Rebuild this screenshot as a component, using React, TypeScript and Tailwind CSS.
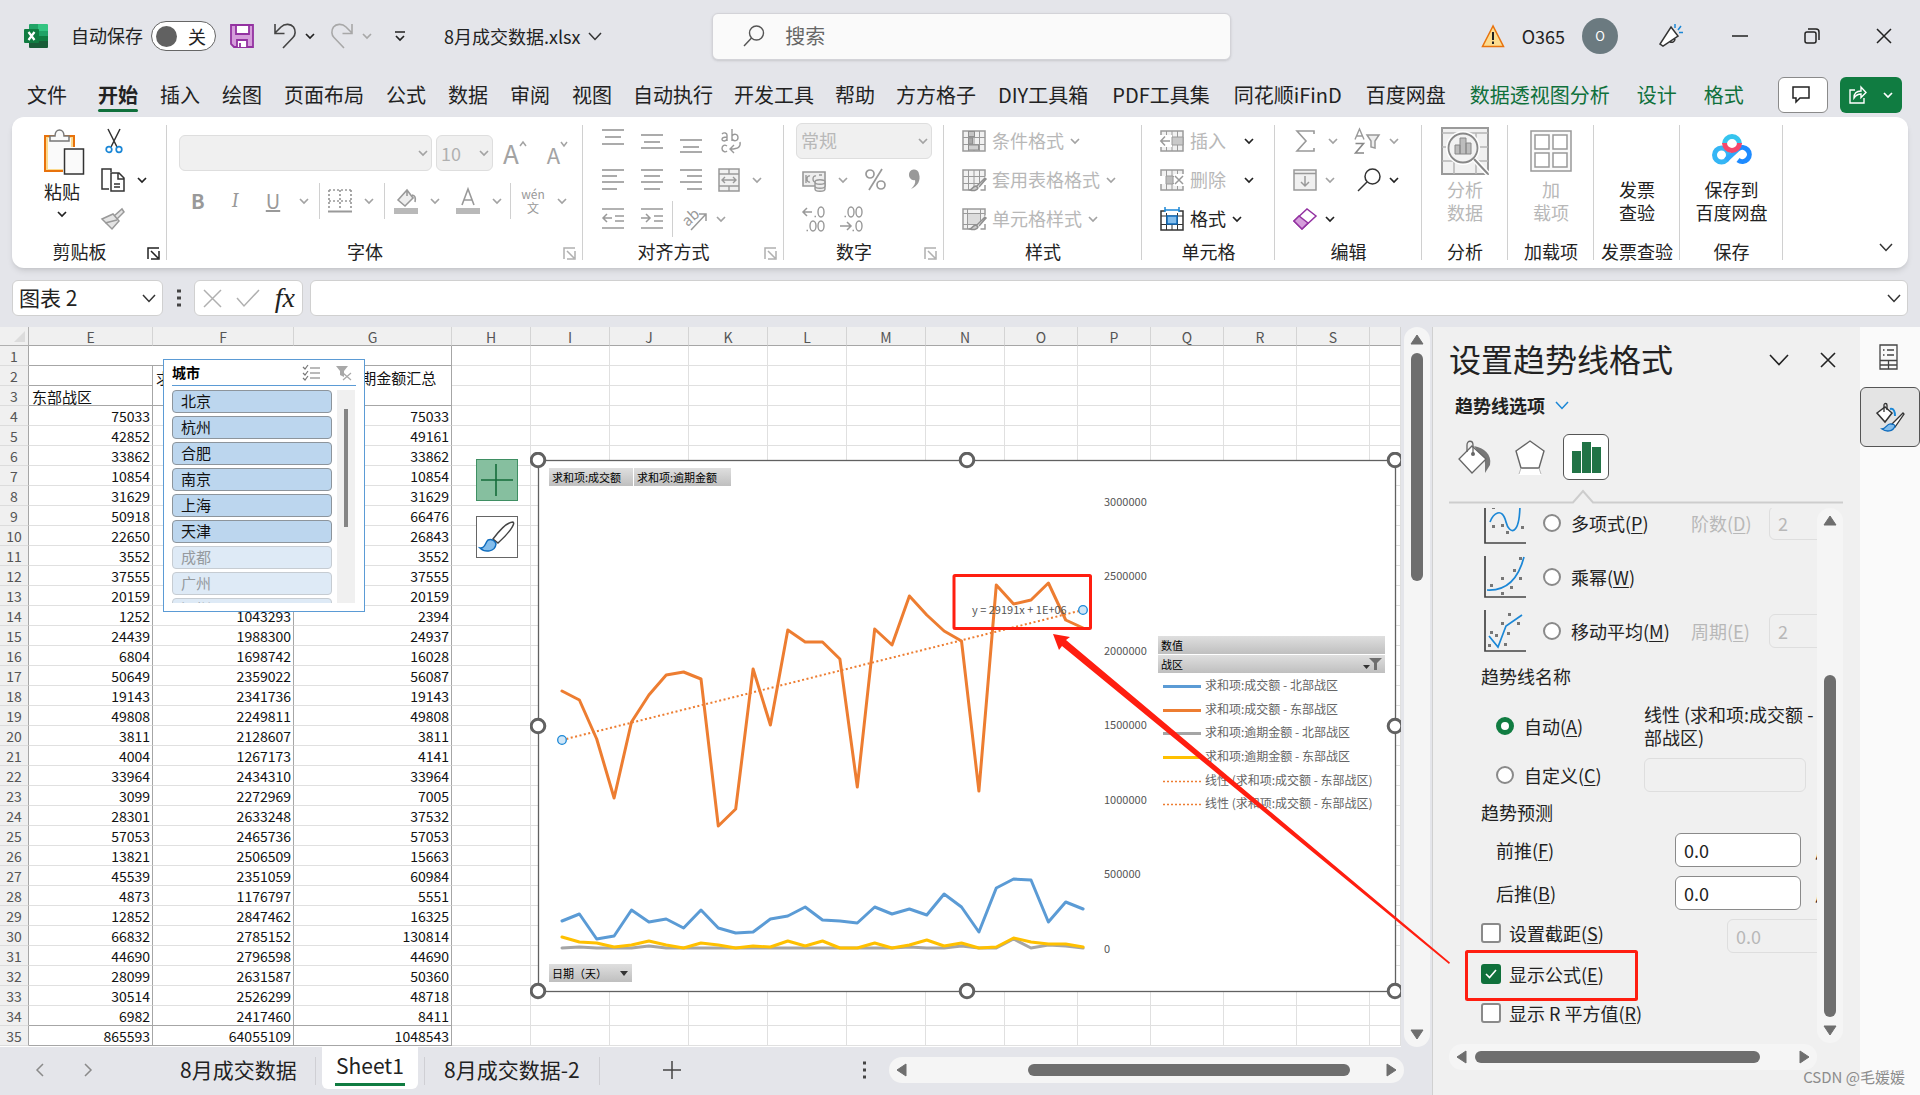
import { useState } from 'react'
import type { ReactNode } from 'react'

const COLS = [
  { name: 'E', w: 'w-[124px]' },
  { name: 'F', w: 'w-[141px]' },
  { name: 'G', w: 'w-[158px]' },
  { name: 'H', w: 'w-[79px]' },
  { name: 'I', w: 'w-[79px]' },
  { name: 'J', w: 'w-[79px]' },
  { name: 'K', w: 'w-[79px]' },
  { name: 'L', w: 'w-[79px]' },
  { name: 'M', w: 'w-[79px]' },
  { name: 'N', w: 'w-[79px]' },
  { name: 'O', w: 'w-[73px]' },
  { name: 'P', w: 'w-[73px]' },
  { name: 'Q', w: 'w-[73px]' },
  { name: 'R', w: 'w-[73px]' },
  { name: 'S', w: 'w-[73px]' },
  { name: '', w: '' },
]

// E, F, G values by row; the slicer covers F4:F13
const ROWS: string[][] = [
  ['', '', ''],
  ['', '求和项:成交额汇总', '求和项:逾期金额汇总'],
  ['东部战区', '', ''],
  ['75033', '', '75033'],
  ['42852', '', '49161'],
  ['33862', '', '33862'],
  ['10854', '', '10854'],
  ['31629', '', '31629'],
  ['50918', '', '66476'],
  ['22650', '', '26843'],
  ['3552', '', '3552'],
  ['37555', '', '37555'],
  ['20159', '', '20159'],
  ['1252', '1043293', '2394'],
  ['24439', '1988300', '24937'],
  ['6804', '1698742', '16028'],
  ['50649', '2359022', '56087'],
  ['19143', '2341736', '19143'],
  ['49808', '2249811', '49808'],
  ['3811', '2128607', '3811'],
  ['4004', '1267173', '4141'],
  ['33964', '2434310', '33964'],
  ['3099', '2272969', '7005'],
  ['28301', '2633248', '37532'],
  ['57053', '2465736', '57053'],
  ['13821', '2506509', '15663'],
  ['45539', '2351059', '60984'],
  ['4873', '1176797', '5551'],
  ['12852', '2847462', '16325'],
  ['66832', '2785152', '130814'],
  ['44690', '2796598', '44690'],
  ['28099', '2631587', '50360'],
  ['30514', '2526299', '48718'],
  ['6982', '2417460', '8411'],
  ['865593', '64055109', '1048543'],
]

// y positions of the 31 daily points, in chart units
const EAST = [691, 700, 739, 798, 722, 695, 675, 672, 679, 826, 809, 669, 725, 630, 642, 642, 659, 787, 629, 645, 596, 615, 631, 641, 791, 585, 604, 600, 583, 620, 628]
const NORTH = [921, 914, 939, 936, 910, 922, 919, 928, 910, 928, 933, 932, 919, 916, 907, 920, 921, 923, 907, 914, 909, 915, 894, 907, 932, 888, 879, 880, 922, 902, 909]
const EAST_DUE = [937, 942, 943, 947, 945, 941, 945, 948, 943, 945, 948, 946, 947, 941, 946, 941, 948, 948, 943, 948, 945, 940, 946, 943, 948, 947, 938, 942, 944, 944, 947]
const NORTH_DUE = [948, 947, 948, 948, 948, 946, 948, 948, 948, 948, 948, 948, 948, 948, 948, 948, 948, 948, 948, 948, 947, 948, 948, 946, 948, 948, 939, 948, 945, 946, 948]

const toPoints = (ys: number[]) => ys.map((y, i) => `${(562 + i * 17.37).toFixed(1)},${y}`).join(' ')

const LEGEND = [
  { label: '求和项:成交额 - 北部战区', color: '#5b9bd5', y: 686 },
  { label: '求和项:成交额 - 东部战区', color: '#ed7d31', y: 710 },
  { label: '求和项:逾期金额 - 北部战区', color: '#a5a5a5', y: 733 },
  { label: '求和项:逾期金额 - 东部战区', color: '#ffc000', y: 757 },
  { label: '线性 (求和项:成交额 - 东部战区)', color: '#ed7d31', y: 781, dotted: true },
  { label: '线性 (求和项:成交额 - 东部战区)', color: '#ed7d31', y: 804, dotted: true },
]

const AXIS = ['3000000', '2500000', '2000000', '1500000', '1000000', '500000', '0']
const AXIS_Y = [502, 576, 651, 725, 800, 874, 949]

const MENU = ['插入', '绘图', '页面布局', '公式', '数据', '审阅', '视图', '自动执行', '开发工具', '帮助', '方方格子']
const ADDIN_MENU = ['DIY工具箱', 'PDF工具集', '同花顺iFinD', '百度网盘']
const CONTEXT_MENU = ['数据透视图分析', '设计', '格式']

const CITIES = ['北京', '杭州', '合肥', '南京', '上海', '天津', '成都', '广州', '深圳']

function Svg({ w, h, children, className = '' }: { w: number; h: number; children: ReactNode; className?: string }) {
  return (
    <svg width={w} height={h} viewBox={`0 0 ${w} ${h}`} fill="none" className={`shrink-0 overflow-visible ${className}`} aria-hidden="true">
      {children}
    </svg>
  )
}

function Chev({ className = 'text-[#222]' }: { className?: string }) {
  return (
    <Svg w={10} h={6} className={className}>
      <path d="M1 1l4 4 4-4" stroke="currentColor" strokeWidth="1.700" />
    </Svg>
  )
}

function BigChev({ className = 'text-[#333]' }: { className?: string }) {
  return (
    <Svg w={14} h={9} className={className}>
      <path d="M1 1l6 6.500 6-6.500" stroke="currentColor" strokeWidth="1.500" />
    </Svg>
  )
}

const gray = 'text-[#a3a3a3]'

function Group({ label, width, launcher, dark, children }: { label: string; width: string; launcher?: boolean; dark?: boolean; children: ReactNode }) {
  return (
    <section className={`${width} shrink-0 relative flex flex-col pt-1 pb-1 after:absolute after:right-0 after:top-2 after:bottom-2 after:w-px after:bg-[#d0d0d0]`}>
      <div className="h-[117px]">{children}</div>
      <div className="h-[26px] flex items-center">
        <span className="flex-1 text-center text-[18px] leading-6 whitespace-nowrap text-[#222]">{label}</span>
        {launcher && (
          <button aria-label={`${label}设置`} className={`w-5 mt-1 ${dark ? 'text-[#222]' : 'text-[#b0b0b0]'}`}>
            <Svg w={13} h={13}>
              <path d="M1 12V1h11M4 4l7 7M12 4v8H4" stroke="currentColor" strokeWidth="1.500" />
            </Svg>
          </button>
        )}
      </div>
    </section>
  )
}

// horizontal strokes for the alignment buttons: [x1, x2, y]
function Lines({ rows, label }: { rows: number[][]; label: string }) {
  return (
    <button aria-label={label} className="w-[22px]">
      <Svg w={22} h={24}>
        {rows.map(([a, b, y]) => (
          <path key={y} d={`M${a} ${y}H${b}`} stroke="#8f8f8f" strokeWidth="1.500" />
        ))}
      </Svg>
    </button>
  )
}

function TableIcon({ kind }: { kind: 'cond' | 'brush' | 'style' | 'insert' | 'delete' }) {
  return (
    <Svg w={24} h={24}>
      <rect x="1" y="2" width="22" height="20" fill="#f1f1f1" stroke="#9a9a9a" strokeWidth="1.500" />
      {kind !== 'style' && <path d="M1 8.500h22M1 15.500h22M6.500 2v20M12 2v20M17.500 2v20" stroke="#9a9a9a" />}
      {kind === 'style' && (
        <>
          <path d="M6 7h12v10H6z" fill="#dcdcdc" />
          <path d="M1 6.500h22M1 17.500h22M5.500 2v20M18.500 2v20" stroke="#9a9a9a" />
        </>
      )}
      {kind === 'cond' && (
        <g stroke="#8f8f8f">
          <rect x="6.500" y="2.500" width="6" height="5" fill="#c4c4c4" />
          <rect x="6.500" y="9" width="4" height="6" fill="#a8a8a8" />
          <rect x="6.500" y="16" width="10" height="5" fill="#d0d0d0" />
        </g>
      )}
      {(kind === 'brush' || kind === 'style') && (
        <>
          <path d="M24 8L11 22v2h13z" fill="#fff" />
          <path d="M23 10l-9 9M14 18c-3 0-3 3-6 4 3 1 7 1 8-2zM23 10l1 1-7 8" stroke="#8f8f8f" strokeWidth="1.500" fill="#ccc" />
          <path d="M18.500 22H23v-5" stroke="#9a9a9a" strokeWidth="1.500" />
        </>
      )}
      {kind === 'insert' && (
        <>
          <path d="M0 6h12v12H0z" fill="#fff" />
          <path d="M12 8h11v8H12z" fill="#c9c9c9" stroke="#9a9a9a" />
          <path d="M10 12H1M5 7.500L.8 12 5 16.500" stroke="#9a9a9a" strokeWidth="1.500" />
        </>
      )}
      {kind === 'delete' && (
        <>
          <path d="M0 8h6v8H0zM14 6h10v12H14z" fill="#fff" />
          <path d="M6 8h7v8H6z" fill="#bdbdbd" stroke="#9a9a9a" />
          <path d="M15 8l8 8M23 8l-8 8" stroke="#9a9a9a" strokeWidth="1.500" />
        </>
      )}
    </Svg>
  )
}

function TitleBar() {
  const [autosave, setAutosave] = useState(false)
  return (
    <header className="h-[72px] flex items-center pl-6 pr-7 text-[18px] leading-6 text-[#222] relative">
      <Svg w={24} h={24}>
        <path d="M5 1a1 1 0 011-1h8v8H5z" fill="#21a366" />
        <path d="M14 0h9a1 1 0 011 1v6H14z" fill="#33c481" />
        <path d="M5 7h9v6H5z" fill="#107c41" />
        <path d="M14 7h10v6H14z" fill="#21a366" />
        <path d="M5 12h9v6H5z" fill="#185c37" />
        <path d="M14 12h10v6H14z" fill="#107c41" />
        <path d="M5 17h19v6a1 1 0 01-1 1H6a1 1 0 01-1-1z" fill="#185c37" />
        <rect x="0" y="5" width="15" height="14" rx="1" fill="#107c41" />
        <path d="M4.500 8l6 8M10.500 8l-6 8" stroke="#fff" strokeWidth="2.200" />
      </Svg>
      <span className="ml-[23px] pb-0.5">自动保存</span>
      <button
        role="switch"
        aria-checked={autosave}
        aria-label="自动保存"
        onClick={() => setAutosave(!autosave)}
        className="ml-2 w-[65px] h-[30px] rounded-full border border-[#666] bg-white flex items-center justify-between pl-1 pr-[9px]"
      >
        <span className="size-[21px] rounded-full bg-[#616161]" />
        <span>关</span>
      </button>
      <button aria-label="保存" className="ml-[14px]">
        <Svg w={24} h={24}>
          <path d="M1 1h22v22H4l-3-3z" fill="#d59ddb" stroke="#9332a1" strokeWidth="1.800" />
          <path d="M6 1h13v9H6zM7 23v-7h10v7" fill="#fff" stroke="#9332a1" strokeWidth="1.800" />
          <path d="M10 19v4" stroke="#9332a1" strokeWidth="1.800" />
        </Svg>
      </button>
      <button aria-label="撤消" className="ml-5 flex items-center gap-[9px]">
        <Svg w={22} h={24}>
          <path d="M1 0v9.500h9.500M1 9l6-6c4-4 10-3 12.500 0 2.500 3.500 2 8-.5 10.500L9 24" stroke="#444" strokeWidth="1.600" />
        </Svg>
        <Chev />
      </button>
      <button aria-label="恢复" className="ml-4 flex items-center gap-[9px]">
        <Svg w={22} h={24}>
          <path d="M21 0v9.500h-9.500M21 9l-6-6C11 -1 5 0 2.500 3 0 6.500.5 11 3 13.500L13 24" stroke="#a8a8a8" strokeWidth="1.600" />
        </Svg>
        <Chev className="text-[#a8a8a8]" />
      </button>
      <button aria-label="自定义快速访问工具栏" className="ml-[22px]">
        <Svg w={12} h={10}>
          <path d="M1 1h10M2 5l4 4 4-4" stroke="#222" strokeWidth="1.700" />
        </Svg>
      </button>
      <button className="ml-[38px] flex items-center gap-2 whitespace-nowrap">
        8月成交数据.xlsx <BigChev />
      </button>

      {/* search */}
      <label className="absolute left-[37.1%] w-[27%] h-[47px] rounded-md bg-[#fafafa] border border-[#d3d3d8] shadow flex items-center pl-[30px] gap-5">
        <Svg w={22} h={22}>
          <circle cx="13.500" cy="8" r="7" stroke="#555" strokeWidth="1.400" />
          <path d="M8.500 13L1 21" stroke="#555" strokeWidth="1.400" />
        </Svg>
        <input aria-label="搜索" placeholder="搜索" className="flex-1 text-[20px] bg-transparent outline-none placeholder:text-[#666]" />
      </label>

      <div className="ml-auto flex items-center">
        <Svg w={24} h={24}>
          <path d="M12 2L1.500 22.500h21z" fill="#fcdc8f" stroke="#e8720c" strokeWidth="1.500" />
          <path d="M12 8v8M12 17.500v2.500" stroke="#222" strokeWidth="2" />
        </Svg>
        <span className="mx-[17px]">O365</span>
        <button aria-label="帐户" className="size-9 rounded-full bg-[#6b7a80] text-white text-[13px]">O</button>
        <button aria-label="即将推出" className="ml-10">
          <Svg w={26} h={26}>
            <path d="M13 4l7 9-15 10-3-2zM12 19a3.500 3.500 0 005-3" fill="#fff" stroke="#333" strokeWidth="1.500" />
            <path d="M17 5V1M20 7l3-4M21 9.500h4" stroke="#1b87d6" strokeWidth="1.500" />
          </Svg>
        </button>
        <button aria-label="最小化" className="ml-12">
          <Svg w={16} h={16}><path d="M0 8h16" stroke="#222" strokeWidth="1.500" /></Svg>
        </button>
        <button aria-label="向下还原" className="ml-14">
          <Svg w={16} h={16}>
            <rect x="1" y="4" width="11" height="11" rx="2" stroke="#222" strokeWidth="1.500" />
            <path d="M4 1h8a3 3 0 013 3v8" stroke="#222" strokeWidth="1.500" />
          </Svg>
        </button>
        <button aria-label="关闭" className="ml-14">
          <Svg w={16} h={16}><path d="M1 1l14 14M15 1L1 15" stroke="#222" strokeWidth="1.500" /></Svg>
        </button>
      </div>
    </header>
  )
}

function MenuBar() {
  return (
    <nav className="h-[45px] flex items-center pl-[27px] pr-[18px] text-[20px] leading-8 text-[#222] whitespace-nowrap">
      <button>文件</button>
      <button className="ml-[31px] font-bold relative after:absolute after:inset-x-0 after:-bottom-px after:h-[3px] after:rounded-full after:bg-[#0f703b]">开始</button>
      <div className="ml-[22px] flex gap-[22px]">
        {MENU.slice(0, 7).map(m => <button key={m}>{m}</button>)}
      </div>
      <div className="ml-[21px] flex gap-[21px]">
        {MENU.slice(7).map(m => <button key={m}>{m}</button>)}
      </div>
      <div className="ml-[22px] flex gap-6">
        {ADDIN_MENU.map(m => <button key={m}>{m}</button>)}
      </div>
      <div className="ml-6 flex gap-[27px] text-[#0f703b]">
        {CONTEXT_MENU.map(m => <button key={m}>{m}</button>)}
      </div>
      <div className="ml-auto flex gap-3">
        <button aria-label="批注" className="w-[50px] h-9 rounded-md border border-[#8a8a8a] bg-white flex items-center justify-center">
          <Svg w={18} h={17} className="-ml-1">
            <path d="M1 1h16v11H8l-4 4v-4H1z" stroke="#222" strokeWidth="1.500" />
          </Svg>
        </button>
        <button aria-label="共享" className="w-[62px] h-9 rounded-md bg-[#107c41] flex items-center justify-center gap-4">
          <Svg w={18} h={18}>
            <path d="M6 4H1v13h14v-5M5 12c0-5 3-7 7-7V1l5 5.500-5 5V8C9 8 7 9 5 12z" stroke="#fff" strokeWidth="1.400" />
          </Svg>
          <Chev className="text-white" />
        </button>
      </div>
    </nav>
  )
}

const row = 'h-[39px] flex items-center'

function Ribbon() {
  return (
    <div className="mx-3 h-[151px] bg-white rounded-xl shadow-md flex relative">
      <Group label="剪贴板" width="w-[155px]" launcher dark>
        <div className="flex pt-2">
          <button className="ml-[27px] flex flex-col items-center text-[18px] text-[#222]">
            <Svg w={42} h={46} className="ml-1">
              <path d="M2 7h29v35H2z" fill="#fbd98d" stroke="#e8720c" strokeWidth="2" />
              <path d="M5 9h23v31H5z" fill="#fafafa" />
              <path d="M7 12V7h5c0-8 9-8 9 0h5v5z" fill="#fafafa" stroke="#777" strokeWidth="1.500" />
              <path d="M20 18h22v28H20z" fill="#fff" />
              <rect x="21.500" y="20" width="19" height="25" fill="#fafafa" stroke="#333" strokeWidth="1.500" />
            </Svg>
            <span className="mt-1 leading-6">粘贴</span>
            <span className="mt-2"><Chev /></span>
          </button>
          <div className="-mt-2 ml-3">
            <div className={row}>
              <button aria-label="剪切" className="ml-2">
                <Svg w={18} h={24}>
                  <path d="M3 0l9 18M15 0L6 18" stroke="#333" strokeWidth="1.500" />
                  <circle cx="4" cy="20.500" r="2.800" stroke="#1b87d6" strokeWidth="1.700" />
                  <circle cx="14" cy="20.500" r="2.800" stroke="#1b87d6" strokeWidth="1.700" />
                </Svg>
              </button>
            </div>
            <div className={row}>
              <button aria-label="复制" className="flex items-center gap-3 ml-1">
                <Svg w={24} h={24}>
                  <path d="M8 21H1V1h9v3" fill="#fff" stroke="#333" strokeWidth="1.500" />
                  <path d="M10 5h8l5 5v13H10zM17 5v6h6M13 16h6M13 19h6" fill="#fff" stroke="#333" strokeWidth="1.500" />
                </Svg>
                <Chev />
              </button>
            </div>
            <div className={row}>
              <button aria-label="格式刷" className="ml-1">
                <Svg w={24} h={22}>
                  <path d="M13 8l8-7 2 3-7 7M1 11l11-5 6 7-7 8zM4 15l12-3" fill="#e4e4e4" stroke="#999" strokeWidth="1.500" />
                </Svg>
              </button>
            </div>
          </div>
        </div>
      </Group>

      <Group label="字体" width="w-[416px]" launcher>
        <div className="pt-[14px] pl-3 flex items-center gap-1">
          <div className="relative flex items-center">
            <select aria-label="字体" disabled className="w-[253px] h-9 rounded-md border border-[#dedede] bg-[#f0f0f0] appearance-none" />
            <span className="absolute right-1"><Chev className={gray} /></span>
          </div>
          <div className="relative flex items-center">
            <select aria-label="字号" disabled className="w-[57px] h-9 pl-1 rounded-md border border-[#dedede] bg-[#f0f0f0] text-[18px] text-[#b0b0b0] opacity-100 appearance-none">
              <option>10</option>
            </select>
            <span className="absolute right-1"><Chev className={gray} /></span>
          </div>
          <button aria-label="增大字号" className={`ml-[6px] flex items-start ${gray}`}>
            <span className="text-[26px] leading-8">A</span>
            <Svg w={8} h={6} className="mt-1"><path d="M1 5l3-4 3 4" stroke="currentColor" strokeWidth="1.500" /></Svg>
          </button>
          <button aria-label="减小字号" className={`ml-4 flex items-start ${gray}`}>
            <span className="text-[22px] leading-8 pt-px">A</span>
            <Svg w={8} h={6} className="mt-1"><path d="M1 1l3 4 3-4" stroke="currentColor" strokeWidth="1.500" /></Svg>
          </button>
        </div>
        <div className="mt-3 h-9 pl-6 flex items-center text-[20px] leading-8 text-[#999]">
          <button aria-label="加粗" className="w-3 font-bold">B</button>
          <button aria-label="倾斜" className="ml-[26px] w-3 italic font-serif">I</button>
          <button className="ml-[22px] underline w-5">U</button>
          <span className="ml-4"><Chev className={gray} /></span>
          <span className="ml-[10px] h-9 w-px bg-[#d0d0d0]" />
          <button aria-label="边框" className="ml-2 flex items-center gap-3">
            <Svg w={24} h={24}>
              <path d="M1 1h22M1 12h22M1 1v20M12 1v20M23 1v20" stroke="#999" strokeWidth="1.700" strokeDasharray="2 2" />
              <path d="M0 22.500h24" stroke="#999" strokeWidth="2" />
            </Svg>
            <Chev className={gray} />
          </button>
          <span className="ml-[10px] h-9 w-px bg-[#d0d0d0]" />
          <button aria-label="填充颜色" className="ml-[9px] flex items-center gap-3">
            <Svg w={24} h={26}>
              <path d="M4 12l9-10 6 8-8 8zM13 2v6M18 7c3 0 4 3 3 7" stroke="#999" strokeWidth="1.600" fill="#eee" />
              <rect y="20" width="24" height="6" fill="#b9b9b9" />
            </Svg>
            <Chev className={gray} />
          </button>
          <button aria-label="字体颜色" className="ml-4 flex items-center gap-3">
            <Svg w={24} h={26}>
              <path d="M6 17l6-16 6 16M8 12h8" stroke="#999" strokeWidth="1.600" />
              <rect y="20" width="24" height="6" fill="#b9b9b9" />
            </Svg>
            <Chev className={gray} />
          </button>
          <span className="ml-2 h-9 w-px bg-[#d0d0d0]" />
          <button aria-label="拼音" className="ml-[10px] flex items-center gap-3">
            <span className="flex flex-col items-center text-[12px] leading-[14px] w-6">
              <span>wén</span>
              <span>文</span>
            </span>
            <Chev className={gray} />
          </button>
        </div>
      </Group>

      <Group label="对齐方式" width="w-[201px]" launcher>
        <div className="pl-[19px]">
          <div className={`${row} gap-[17px]`}>
            <Lines label="顶端对齐" rows={[[0, 22, 1], [3, 19, 8], [0, 22, 15]]} />
            <Lines label="垂直居中" rows={[[0, 22, 6], [3, 19, 13], [0, 22, 19]]} />
            <Lines label="底端对齐" rows={[[0, 22, 11], [3, 19, 18], [0, 22, 23]]} />
            <button aria-label="自动换行" className={gray}>
              <Svg w={22} h={26}>
                <path d="M3 6c2-2 5-1 5 1v6M8 9c-3 0-5 1-5 2.500S7 14 8 11M13 1v12M13 8c2-3 6-2 6 1.500S15 14 13 11" stroke="#999" strokeWidth="1.400" />
                <path d="M8 18c-3-2-5 0-5 2.500S6 25 8 23M21 14c1 5-2 7-9 7M15 17l-4 4 4 4" stroke="#999" strokeWidth="1.400" />
              </Svg>
            </button>
          </div>
          <div className={`${row} gap-[17px]`}>
            <Lines label="左对齐" rows={[[0, 22, 2], [0, 15, 8], [0, 22, 14], [0, 15, 21]]} />
            <Lines label="居中" rows={[[0, 22, 2], [3, 19, 8], [0, 22, 14], [3, 19, 21]]} />
            <Lines label="右对齐" rows={[[0, 22, 2], [7, 22, 8], [0, 22, 14], [7, 22, 21]]} />
            <button aria-label="合并后居中" className="-ml-px flex items-center gap-3">
              <Svg w={22} h={24}>
                <rect x="1" y="1" width="20" height="22" fill="#f0f0f0" stroke="#999" strokeWidth="1.500" />
                <path d="M1 6h20M1 18h20M11 1v5M11 18v5M4 12h14M7 9l-3 3 3 3M15 9l3 3-3 3" stroke="#999" strokeWidth="1.400" />
              </Svg>
              <Chev className={gray} />
            </button>
          </div>
          <div className={`${row} gap-[17px]`}>
            <button aria-label="减少缩进量">
              <Svg w={22} h={24}><path d="M0 2h22M13 9h9M13 14h9M0 21h22M10 11H1M5 7l-4 4 4 4" stroke="#999" strokeWidth="1.500" /></Svg>
            </button>
            <button aria-label="增加缩进量">
              <Svg w={22} h={24}><path d="M0 2h22M13 9h9M13 14h9M0 21h22M0 11h9M5 7l4 4-4 4" stroke="#999" strokeWidth="1.500" /></Svg>
            </button>
            <button aria-label="方向" className="flex items-center gap-2 -ml-2 border-l border-[#d0d0d0] h-9 pl-[9px]">
              <Svg w={26} h={24}>
                <text x="2" y="17" fontSize="15" fill="#999" transform="rotate(-42 8 14)">ab</text>
                <path d="M9 23L24 7M17 7h7v7" stroke="#999" strokeWidth="1.500" />
              </Svg>
              <Chev className={gray} />
            </button>
          </div>
        </div>
      </Group>

      <Group label="数字" width="w-[160px]" launcher>
        <div className="pl-3">
          <div className={`${row} relative`}>
            <select aria-label="数字格式" disabled className="w-[136px] h-9 pl-1 rounded-md border border-[#dedede] bg-[#f0f0f0] text-[18px] text-[#b8b8b8] opacity-100 appearance-none">
              <option>常规</option>
            </select>
            <span className="absolute right-4"><Chev className={gray} /></span>
          </div>
          <div className={`${row} pl-[6px]`}>
            <button aria-label="会计数字格式" className="flex items-center gap-3">
              <Svg w={24} h={24}>
                <path d="M1 4h22v14H1z" fill="#eee" stroke="#999" strokeWidth="1.600" />
                <path d="M8 8c-4-1-4 7 0 6M14 8c-4-1-4 7 0 6M17 7h3M4 7v8" stroke="#999" strokeWidth="1.400" />
                <path d="M13 14v7c0 3 10 3 10 0v-7c0-3-10-3-10 0c0 3 10 3 10 0M13 18c0 3 10 3 10 0" fill="#eee" stroke="#999" strokeWidth="1.400" />
              </Svg>
              <Chev className={gray} />
            </button>
            <button aria-label="百分比样式" className="ml-4">
              <Svg w={24} h={24}>
                <circle cx="6" cy="6" r="4" stroke="#999" strokeWidth="1.700" />
                <circle cx="17" cy="17" r="4" stroke="#999" strokeWidth="1.700" />
                <path d="M18 1L5 22" stroke="#999" strokeWidth="1.700" />
              </Svg>
            </button>
            <button aria-label="千位分隔样式" className="ml-5">
              <Svg w={14} h={22}>
                <path d="M1 6a5 5 0 0110-1c2 6-1 12-8 15 3-3 5-6 4-9-3 1-6-2-6-5z" fill="#999" />
              </Svg>
            </button>
          </div>
          <div className={`${row} pl-[6px] gap-[14px] text-[#999]`}>
            <button aria-label="增加小数位数">
              <Svg w={24} h={26}>
                <path d="M10 6H1M5 2L1 6l4 4" stroke="#999" strokeWidth="1.500" />
                <ellipse cx="19" cy="6" rx="3" ry="5" stroke="#999" strokeWidth="1.400" />
                <ellipse cx="11" cy="20" rx="3" ry="5" stroke="#999" strokeWidth="1.400" />
                <ellipse cx="19" cy="20" rx="3" ry="5" stroke="#999" strokeWidth="1.400" />
                <path d="M12.500 10.500h1.500M4.500 24.500H6" stroke="#999" strokeWidth="1.600" />
              </Svg>
            </button>
            <button aria-label="减少小数位数">
              <Svg w={24} h={26}>
                <path d="M0 20h11M7 16l4 4-4 4" stroke="#999" strokeWidth="1.500" />
                <ellipse cx="11" cy="6" rx="3" ry="5" stroke="#999" strokeWidth="1.400" />
                <ellipse cx="19" cy="6" rx="3" ry="5" stroke="#999" strokeWidth="1.400" />
                <ellipse cx="19" cy="20" rx="3" ry="5" stroke="#999" strokeWidth="1.400" />
                <path d="M4.500 10.500H6M12.500 24.500h1.500" stroke="#999" strokeWidth="1.600" />
              </Svg>
            </button>
          </div>
        </div>
      </Group>

      <Group label="样式" width="w-[198px]">
        <div className="pl-[18px] text-[18px] text-[#b8b8b8] whitespace-nowrap">
          <button className={`${row} gap-[6px]`}><TableIcon kind="cond" />条件格式<Chev className={gray} /></button>
          <button className={`${row} gap-[6px]`}><TableIcon kind="brush" />套用表格格式<Chev className={gray} /></button>
          <button className={`${row} gap-[6px]`}><TableIcon kind="style" />单元格样式<Chev className={gray} /></button>
        </div>
      </Group>

      <Group label="单元格" width="w-[133px]">
        <div className="pl-[18px] text-[18px] text-[#b8b8b8] whitespace-nowrap">
          <button className={`${row} gap-[6px]`}><TableIcon kind="insert" />插入<span className="ml-3"><Chev /></span></button>
          <button className={`${row} gap-[6px]`}><TableIcon kind="delete" />删除<span className="ml-3"><Chev /></span></button>
          <button className={`${row} gap-[6px] text-[#222]`}>
            <Svg w={24} h={24}>
              <path d="M1 4h22v19H1z" fill="#fff" stroke="#333" strokeWidth="1.500" />
              <path d="M6.500 4v19M17.500 4v19M12 17v6M1 9h22M1 17.500h22" stroke="#333" />
              <path d="M5 0h14v6H5z" fill="#fff" />
              <rect x="7" y="9" width="10" height="8" fill="#83bdec" stroke="#0f6cbd" strokeWidth="1.500" />
              <path d="M5 3h14M5 0v5M19 0v5" stroke="#1b87d6" strokeWidth="1.500" />
            </Svg>
            格式<Chev />
          </button>
        </div>
      </Group>

      <Group label="编辑" width="w-[147px]">
        <div className="pl-[18px]">
          <div className={row}>
            <button aria-label="自动求和" className="flex items-center gap-[13px] pl-0.5">
              <Svg w={20} h={24}><path d="M19 5V2H2l9 10-9 10h17v-3" stroke="#999" strokeWidth="1.600" /></Svg>
              <Chev className={gray} />
            </button>
            <button aria-label="排序和筛选" className="flex items-center gap-2 ml-[17px]">
              <Svg w={26} h={26}>
                <path d="M0 11.500L4.500 1 9 11.500M1.500 8h6" stroke="#999" strokeWidth="1.400" />
                <path d="M0.500 15.500h8L0.500 25h8.500" stroke="#888" strokeWidth="1.600" />
                <path d="M12 7h12l-4 6v7l-4-1v-6z" fill="#eee" stroke="#999" strokeWidth="1.500" />
              </Svg>
              <Chev className={gray} />
            </button>
          </div>
          <div className={row}>
            <button aria-label="填充" className="flex items-center gap-2">
              <Svg w={24} h={24}>
                <rect x="1" y="2" width="22" height="20" fill="#f0f0f0" stroke="#999" strokeWidth="1.500" />
                <path d="M1 5.500h22M12 8v10M8 14l4 4 4-4" stroke="#999" strokeWidth="1.500" />
              </Svg>
              <Chev className={gray} />
            </button>
            <button aria-label="查找和选择" className="flex items-center gap-2 ml-[22px]">
              <Svg w={24} h={24}>
                <circle cx="15.500" cy="8.500" r="7.500" stroke="#333" strokeWidth="1.500" />
                <path d="M10 14L1 23" stroke="#333" strokeWidth="1.500" />
              </Svg>
              <Chev />
            </button>
          </div>
          <div className={row}>
            <button aria-label="清除" className="flex items-center gap-2">
              <Svg w={24} h={24}>
                <path d="M1 14L14 2l9 7L9 22z" fill="#fff" stroke="#9332a1" strokeWidth="1.500" />
                <path d="M1 14l5-5 9 7-6 6z" fill="#d59ddb" stroke="#9332a1" strokeWidth="1.500" />
              </Svg>
              <Chev />
            </button>
          </div>
        </div>
      </Group>

      <Group label="分析" width="w-[86px]">
        <button className="w-full pt-[6px] flex flex-col items-center text-[18px] leading-[23px] text-[#b8b8b8]">
          <Svg w={48} h={48}>
            <rect x="1" y="1" width="46" height="46" fill="#f1f1f1" stroke="#9a9a9a" strokeWidth="2" />
            <path d="M1 6h46M1 20h46M1 34h46M13 6v41M35 6v41" stroke="#b5b5b5" strokeWidth="1.500" />
            <circle cx="22" cy="21" r="17" fill="#fff" />
            <circle cx="22" cy="21" r="14.500" fill="#f3f3f3" stroke="#888" strokeWidth="1.800" />
            <path d="M33 32l14 15" stroke="#fff" strokeWidth="5" />
            <path d="M33 32l14 15" stroke="#888" strokeWidth="2" />
            <path d="M14 18h5v9h-5zM19 11h6v16h-6zM25 16h5v11h-5z" fill="#bdbdbd" stroke="#888" />
          </Svg>
          <span className="mt-[3px]">分析</span>
          <span>数据</span>
        </button>
      </Group>

      <Group label="加载项" width="w-[86px]">
        <button className="w-full pt-[6px] flex flex-col items-center text-[18px] leading-[23px] text-[#b8b8b8]">
          <Svg w={42} h={48}>
            <rect x="1" y="4" width="40" height="40" fill="#fafafa" stroke="#999" strokeWidth="1.500" />
            <path d="M5 8h14v14H5zM23 8h14v14H23zM5 26h14v14H5zM23 26h14v14H23z" fill="#fff" stroke="#999" strokeWidth="1.500" />
          </Svg>
          <span className="mt-[3px]">加</span>
          <span>载项</span>
        </button>
      </Group>

      <Group label="发票查验" width="w-[86px]">
        <button className="w-full pt-[57px] flex flex-col items-center text-[18px] leading-[23px] text-[#222]">
          <span>发票</span>
          <span>查验</span>
        </button>
      </Group>

      <Group label="保存" width="w-[103px]">
        <button className="w-full pt-[6px] flex flex-col items-center text-[18px] leading-[23px] text-[#222] whitespace-nowrap">
          <Svg w={40} h={48}>
            <circle cx="9.500" cy="28" r="7" stroke="#35b6f5" strokeWidth="5" />
            <path d="M14 33L26 22" stroke="#2fa8fb" strokeWidth="5" />
            <path d="M26 22a7 7 0 110 11" stroke="#1e8bff" strokeWidth="5" />
            <path d="M12.500 17a7.500 7.500 0 0115 0" stroke="#35c4ee" strokeWidth="5" />
            <path d="M12.500 16a7.500 7.500 0 0015 0" stroke="#f5476b" strokeWidth="5" />
          </Svg>
          <span className="mt-[3px]">保存到</span>
          <span>百度网盘</span>
        </button>
      </Group>

      <button aria-label="功能区显示选项" className="ml-auto self-end pr-[15px] pb-4"><BigChev /></button>
    </div>
  )
}

function FormulaBar() {
  return (
    <div className="mt-3 mb-[11px] mx-3 h-9 flex items-center">
      <div className="w-[151px] h-9 rounded-md border border-[#d0d0d0] bg-white flex items-center pl-[6px] pr-[6px]">
        <input aria-label="名称框" defaultValue="图表 2" className="w-0 flex-1 text-[21px] text-[#222] outline-none" />
        <BigChev />
      </div>
      <Svg w={4} h={18} className="ml-[14px]">
        <path d="M0 2h4M0 9h4M0 16h4" stroke="#444" strokeWidth="3" />
      </Svg>
      <div className="ml-[13px] w-[109px] h-9 rounded-md border border-[#d0d0d0] bg-white flex items-center justify-between pl-2 pr-[7px]">
        <button aria-label="取消">
          <Svg w={19} h={19}><path d="M1 1l17 17M18 1L1 18" stroke="#b0b0b0" strokeWidth="1.500" /></Svg>
        </button>
        <button aria-label="输入">
          <Svg w={24} h={18}><path d="M1 9l7 8L23 1" stroke="#b0b0b0" strokeWidth="1.500" /></Svg>
        </button>
        <button aria-label="插入函数" className="font-['Liberation_Serif',serif] italic text-[28px] leading-8 text-[#222]">fx</button>
      </div>
      <div className="ml-[7px] flex-1 h-9 rounded-md border border-[#d0d0d0] bg-white flex items-center pr-[6px]">
        <input aria-label="编辑栏" className="flex-1 pl-2 outline-none" />
        <BigChev />
      </div>
    </div>
  )
}

// pivot table area has darker borders than the sheet's own grid
function cellBorder(r: number, c: number) {
  if (c > 2) return 'border-r border-b border-[#e0e0e0]'
  const right = r === 1 && c < 2 ? '' : 'border-r border-r-[#a6a6a6]'
  if (r === 1 || r === 3 || r >= 34 || (r === 2 && c === 0)) return `${right} border-b border-b-[#a6a6a6]`
  if (r === 2) return `${right}`
  return `${right} border-b border-b-[#e0e0e0]`
}

function Grid() {
  return (
    <table className="w-full table-fixed border-separate border-spacing-0 leading-[17px]">
      <thead>
        <tr className="h-[19px] bg-[#f0f0f0] text-[14px] text-[#555]">
          <th className="w-[29px] p-0 border-r border-b border-[#b0b0b0]" aria-label="全选">
            <Svg w={11} h={11} className="ml-auto mr-[3px]"><path d="M11 0v11H0z" fill="#dcdcdc" /></Svg>
          </th>
          {COLS.map(c => (
            <th key={c.name} className={`${c.w} p-0 pt-0.5 font-normal leading-4 border-r border-b border-r-[#d4d4d4] border-b-[#a6a6a6]`}>{c.name}</th>
          ))}
        </tr>
      </thead>
      <tbody>
        {ROWS.map((cells, i) => {
          const r = i + 1
          return (
            <tr key={r} className="h-5">
              <th className="p-0 pt-0.5 bg-[#f0f0f0] font-normal text-[14px] text-[#555] border-r border-b border-r-[#a6a6a6] border-b-[#dcdcdc]">{r}</th>
              {COLS.map((col, c) => (
                <td
                  key={col.name}
                  className={`p-0 pt-0.5 whitespace-nowrap text-[#111] ${r > 3 ? 'text-right pr-[2px] text-[14px]' : 'pl-[3px] text-[15px]'} ${cellBorder(r, c)}`}
                >
                  {cells[c] ?? ''}
                </td>
              ))}
            </tr>
          )
        })}
      </tbody>
    </table>
  )
}

function Slicer() {
  return (
    <div className="absolute left-[163px] top-8 w-[202px] h-[253px] bg-white border border-[#5b9bd5] px-2 pb-2 flex flex-col">
      <div className="h-[26px] shrink-0 flex items-center border-b border-[#5b9bd5] text-[14px] font-bold text-black">
        城市
        <button aria-label="多选" className="ml-auto">
          <Svg w={17} h={16}>
            <path d="M7 3h10M7 8h10M7 13h10M0 2l2 2 3-4M0 8l2 2 3-4M0 13l2 2 3-4" stroke="#777" strokeWidth="1.200" />
          </Svg>
        </button>
        <button aria-label="清除筛选器" className="ml-4 mr-1">
          <Svg w={16} h={16}>
            <path d="M0 1h12L8 6v6l-4-2V6z" fill="#a8a8a8" />
            <path d="M7 8l8 7M15 8l-8 7" stroke="#a8a8a8" strokeWidth="1.200" />
          </Svg>
        </button>
      </div>
      <div className="mt-1 flex-1 min-h-0 flex gap-[5px] overflow-hidden">
        <ul className="w-40 flex flex-col gap-[3px]">
          {CITIES.map((c, i) => (
            <li key={c}>
              <button
                className={`block w-full h-[23px] pb-0.5 pl-2 rounded text-left text-[15px] leading-[19px] border ${
                  i < 6 ? 'bg-[#bcd6ee] border-[#8d959c] text-[#111]' : 'bg-[#deeaf6] border-[#c6ccd2] text-[#959a9e]'
                }`}
              >
                {c}
              </button>
            </li>
          ))}
        </ul>
        <div className="w-[18px] bg-[#f0f0f0] flex justify-center">
          <div className="mt-[19px] w-1 h-[118px] bg-[#858585]" />
        </div>
      </div>
    </div>
  )
}

const fieldBtn = 'absolute h-[18px] px-[3px] flex items-center justify-between text-[11px] text-black whitespace-nowrap bg-gradient-to-b from-[#dfdfdf] to-[#bfbfbf]'

function ChartObject() {
  return (
    <div className="absolute left-[530px] top-[125px] w-[873px] h-[548px]">
      <svg width="873" height="548" viewBox="530 452 873 548" fill="none">
        <rect x="538.500" y="460.500" width="857" height="531" fill="#fff" stroke="#616161" strokeWidth="1.300" />
        {AXIS.map((t, i) => (
          <text key={t} x="1104" y={AXIS_Y[i] + 4} fontSize="11" fill="#555">{t}</text>
        ))}
        <g strokeWidth="3" strokeLinejoin="round" strokeLinecap="round">
          <polyline points={toPoints(NORTH_DUE)} stroke="#a5a5a5" />
          <polyline points={toPoints(EAST_DUE)} stroke="#ffc000" />
          <polyline points={toPoints(NORTH)} stroke="#5b9bd5" />
          <polyline points={toPoints(EAST)} stroke="#ed7d31" />
        </g>
        <path d="M562 740L1083 610" stroke="#ed7d31" strokeWidth="2" strokeDasharray="2 2.500" />
        <text x="972" y="614" fontSize="11" fill="#555">y = 29191x + 1E+06</text>
        <g fill="#cfe6f7" stroke="#1b87d6" strokeWidth="1.300">
          <circle cx="562" cy="740" r="4.300" />
          <circle cx="1083" cy="610" r="4.300" />
        </g>
        {LEGEND.map((l, i) => (
          <g key={i}>
            <path d={`M1163 ${l.y}.500H1201`} stroke={l.color} strokeWidth={l.dotted ? 1.5 : 3} strokeDasharray={l.dotted ? '2 2' : undefined} />
            <text x="1205" y={l.y + 4} fontSize="12" fill="#666">{l.label}</text>
          </g>
        ))}
        <g fill="#fff" stroke="#616161" strokeWidth="3">
          {[460, 726, 991].map(y => [538, 967, 1395].map(x => (
            x === 967 && y === 726 ? null : <circle key={`${x}-${y}`} cx={x} cy={y} r="6.800" />
          )))}
        </g>
      </svg>
      <button className={`${fieldBtn} left-[19px] top-4 w-[84px]`}>求和项:成交额</button>
      <button className={`${fieldBtn} left-[104px] top-4 w-[97px]`}>求和项:逾期金额</button>
      <button className={`${fieldBtn} left-[628px] top-[184px] w-[227px]`}>数值</button>
      <button className={`${fieldBtn} left-[628px] top-[203px] w-[227px]`}>
        战区
        <Svg w={19} h={12}>
          <path d="M0 7h7l-3.500 4z" fill="#333" />
          <path d="M6 0h13l-5 5v7h-3V5z" fill="#6e6e6e" />
        </Svg>
      </button>
      <button className={`${fieldBtn} left-[19px] top-[512px] w-[83px]`}>
        日期（天）
        <Svg w={10} h={5}><path d="M1 0h8L5 5z" fill="#333" /></Svg>
      </button>
    </div>
  )
}

function Arrow({ dir }: { dir: 'up' | 'down' | 'left' | 'right' }) {
  const d = {
    up: 'M7 2l6 9H1z',
    down: 'M7 12l6-9H1z',
    left: 'M2 7l9-6v12z',
    right: 'M12 7L3 1v12z',
  }[dir]
  return (
    <Svg w={14} h={14}>
      <path d={d} fill="#6e6e6e" stroke="#6e6e6e" strokeLinejoin="round" />
    </Svg>
  )
}

function SheetTabs() {
  return (
    <footer className="h-12 shrink-0 flex items-start text-[21px] text-[#222] whitespace-nowrap">
      <div className="h-[46px] flex items-center w-[315px]">
        <button aria-label="上一个" className="ml-[35px]"><Svg w={10} h={14}><path d="M8 1L2 7l6 6" stroke="#8a8a8a" strokeWidth="1.500" /></Svg></button>
        <button aria-label="下一个" className="ml-[38px]"><Svg w={10} h={14}><path d="M2 1l6 6-6 6" stroke="#8a8a8a" strokeWidth="1.500" /></Svg></button>
        <button className="ml-[87px]">8月成交数据</button>
      </div>
      <span className="mt-[10px] mr-[6px] w-px h-7 bg-[#cfcfd4]" />
      <button className="w-24 h-[42px] rounded-b-md bg-white flex flex-col items-center">
        <span className="leading-9 px-px border-b-3 border-[#107c41]">Sheet1</span>
      </button>
      <span className="mt-[10px] ml-[6px] w-px h-7 bg-[#cfcfd4]" />
      <button className="h-[46px] px-[19px]">8月成交数据-2</button>
      <span className="mt-[10px] w-px h-7 bg-[#cfcfd4]" />
      <button aria-label="新工作表" className="h-[46px] ml-[63px]">
        <Svg w={18} h={18}><path d="M9 0v18M0 9h18" stroke="#444" strokeWidth="1.500" /></Svg>
      </button>
      <div className="ml-auto mr-7 h-[46px] flex items-center">
        <Svg w={4} h={18}><path d="M0 2h3M0 9h3M0 16h3" stroke="#444" strokeWidth="3" /></Svg>
        <div className="ml-[22px] w-[515px] h-[26px] rounded-full bg-[#f5f5f5] flex items-center justify-between px-[6px]">
          <Arrow dir="left" />
          <div className="ml-[84px] w-[322px] h-3 rounded-full bg-[#6e6e6e]" />
          <Arrow dir="right" />
        </div>
      </div>
    </footer>
  )
}

function Key({ text, k }: { text: string; k: string }) {
  return <>{text}(<u className="underline-offset-2">{k}</u>)</>
}

const radio = 'appearance-none shrink-0 size-[18px] rounded-full border-2 border-[#8a8a8a] bg-white checked:border-[5px] checked:border-[#107c41]'
const disabledInput = 'shrink-0 h-[34px] rounded-md border border-[#dedede] bg-transparent pl-2 text-[18px] text-[#b8b8b8]'
const numInput = 'shrink-0 w-[126px] h-[34px] rounded-md border border-[#8a8a8a] bg-white pl-2 text-[18px] text-[#222]'

function TrendIcon({ d, dots }: { d: string; dots: number[][] }) {
  return (
    <Svg w={42} h={42} className="mr-[17px]">
      <path d="M1 0v41h41" stroke="#444" strokeWidth="1.700" />
      {dots.map(([x, y]) => <rect key={`${x},${y}`} x={x} y={y} width="3" height="3" fill="#777" />)}
      <path d={d} stroke="#1b87d6" strokeWidth="1.700" />
    </Svg>
  )
}

function Check({ text, k, checked, onChange }: { text: string; k: string; checked: boolean; onChange: () => void }) {
  return (
    <label className="flex items-center gap-2">
      <span className="relative size-5">
        <input type="checkbox" checked={checked} onChange={onChange} className="block appearance-none size-5 rounded-[3px] border-2 border-[#8a8a8a] bg-white checked:bg-[#0f703b] checked:border-[#0f703b]" />
        {checked && (
          <span className="absolute left-1 top-[5px] pointer-events-none">
            <Svg w={12} h={10}><path d="M1 5l3.500 3.500L11 1" stroke="#fff" strokeWidth="1.600" /></Svg>
          </span>
        )}
      </span>
      <span><Key text={text} k={k} /></span>
    </label>
  )
}

function FormatPane() {
  const [intercept, setIntercept] = useState(false)
  const [formula, setFormula] = useState(true)
  const [rsq, setRsq] = useState(false)

  return (
    <aside className="w-[428px] shrink-0 bg-[#f0f0f0] border-l border-[#d0d0d0] pl-4 pr-[17px] flex flex-col text-[#222]">
      <div className="h-[66px] shrink-0 flex items-center">
        <h2 className="text-[32px] leading-10 pb-1">设置趋势线格式</h2>
        <button aria-label="任务窗格选项" className="ml-auto">
          <Svg w={20} h={12}><path d="M1 1l9 9.500L19 1" stroke="#222" strokeWidth="1.600" /></Svg>
        </button>
        <button aria-label="关闭窗格" className="ml-[31px] mr-[7px]">
          <Svg w={16} h={16}><path d="M1 1l14 14M15 1L1 15" stroke="#222" strokeWidth="1.600" /></Svg>
        </button>
      </div>
      <button className="h-6 shrink-0 flex items-center gap-[10px] pl-[6px] text-[18px] font-bold">
        趋势线选项
        <Svg w={14} h={9}><path d="M1 1l6 6.500L13 1" stroke="#1b87d6" strokeWidth="1.500" /></Svg>
      </button>
      <div className="mt-[17px] h-[46px] shrink-0 flex items-center pl-[9px]">
        <button aria-label="填充与线条">
          <Svg w={34} h={34}>
            <path d="M16 6c10 2 18 8 16 19l-5 8c0-10 1-14-4-17z" fill="#777" />
            <path d="M14 6l14 13-14 14L1 19z" fill="#fff" stroke="#666" strokeWidth="1.300" />
            <path d="M9 12V5c0-5 6-5 6 0v9" stroke="#666" strokeWidth="1.300" />
            <circle cx="15" cy="14" r="2" fill="#666" />
          </Svg>
        </button>
        <button aria-label="效果" className="ml-[22px]">
          <Svg w={32} h={36}>
            <path d="M7 30h18l2 6H5z" fill="#fff" />
            <path d="M16 2l14 10-5 17H7L2 12z" fill="#fff" stroke="#666" strokeWidth="1.400" />
            <path d="M7 29l-2 6M25 29l2 6" stroke="#bbb" />
          </Svg>
        </button>
        <button aria-label="趋势线选项" className="ml-[17px] size-[46px] rounded-md border border-[#555] bg-white flex items-center justify-center">
          <Svg w={29} h={31}><path d="M0 9h9v22H0zM10 0h9v31h-9zM20 5h9v26h-9z" fill="#217346" /></Svg>
        </button>
      </div>
      <svg className="w-full h-6 mt-2 shrink-0 block" fill="none">
        <path d="M0 14.500H124L134 3l10 11.500H600" stroke="#cdcdcd" strokeWidth="2" />
      </svg>

      <div className="h-[535px] -mt-1 flex shrink-0">
        <div className="flex-1 overflow-hidden">
          <div className="w-[520px] -mt-3 pl-8 text-[18px] whitespace-nowrap">
            <div className="h-[54px] flex items-center pl-[3px]">
              <TrendIcon d="M6 20c3-8 12-16 16 0 3 12 14 16 14-20" dots={[[8, 4], [20, 3], [8, 23], [17, 22], [22, 29], [37, 24]]} />
              <label className="w-[148px] flex items-center gap-[10px]">
                <input type="radio" name="kind" className={radio} /><span><Key text="多项式" k="P" /></span>
              </label>
              <label className="flex items-center text-[#b8b8b8]">
                <span className="w-[78px]"><Key text="阶数" k="D" /></span>
                <input disabled defaultValue="2" className={`${disabledInput} w-20`} />
              </label>
            </div>
            <div className="h-[54px] flex items-center pl-[3px]">
              <TrendIcon d="M3 34c18 1 31-10 37-33" dots={[[35, 1], [29, 13], [17, 21], [35, 21], [6, 28], [26, 30], [17, 36]]} />
              <label className="flex items-center gap-[10px]">
                <input type="radio" name="kind" className={radio} /><span><Key text="乘幂" k="W" /></span>
              </label>
            </div>
            <div className="h-[54px] flex items-center pl-[3px]">
              <TrendIcon d="M5 26l9 11 8-21 16-11" dots={[[24, 3], [17, 12], [33, 12], [6, 21], [11, 24], [23, 22], [4, 34], [20, 33]]} />
              <label className="w-[148px] flex items-center gap-[10px]">
                <input type="radio" name="kind" className={radio} /><span><Key text="移动平均" k="M" /></span>
              </label>
              <label className="flex items-center text-[#b8b8b8]">
                <span className="w-[78px]"><Key text="周期" k="E" /></span>
                <input disabled defaultValue="2" className={`${disabledInput} w-20`} />
              </label>
            </div>

            <h3 className="h-9 leading-9">趋势线名称</h3>
            <div className="h-16 flex items-center pl-[15px]">
              <label className="w-[148px] flex items-center gap-[10px]">
                <input type="radio" name="title" defaultChecked className={radio} /><span><Key text="自动" k="A" /></span>
              </label>
              <p className="leading-[23px]">线性 (求和项:成交额 - 东<br />部战区)</p>
            </div>
            <div className="h-[34px] flex items-center pl-[15px]">
              <label className="w-[148px] flex items-center gap-[10px]">
                <input type="radio" name="title" className={radio} /><span><Key text="自定义" k="C" /></span>
              </label>
              <input aria-label="自定义名称" disabled className={`${disabledInput} w-[162px]`} />
            </div>

            <h3 className="h-[41px] leading-10">趋势预测</h3>
            <label className="h-[34px] flex items-center pl-[15px]">
              <span className="w-[179px]"><Key text="前推" k="F" /></span>
              <input defaultValue="0.0" className={numInput} />
              <span className="ml-[14px]">周期</span>
            </label>
            <label className="mt-[9px] h-[34px] flex items-center pl-[15px]">
              <span className="w-[179px]"><Key text="后推" k="B" /></span>
              <input defaultValue="0.0" className={numInput} />
              <span className="ml-[14px]">周期</span>
            </label>

            <div className="mt-[9px] h-[34px] flex items-center">
              <div className="w-[246px] pb-1.5"><Check text="设置截距" k="S" checked={intercept} onChange={() => setIntercept(!intercept)} /></div>
              <input aria-label="截距" disabled defaultValue="0.0" className={`${disabledInput} w-[126px]`} />
            </div>
            <div className="h-[42px] flex items-center"><Check text="显示公式" k="E" checked={formula} onChange={() => setFormula(!formula)} /></div>
            <div className="h-9 flex items-center"><Check text="显示 R 平方值" k="R" checked={rsq} onChange={() => setRsq(!rsq)} /></div>
          </div>
        </div>
        <div className="w-[26px] rounded-full bg-[#f5f5f5] flex flex-col items-center justify-between py-[6px]">
          <Arrow dir="up" />
          <div className="mt-[140px] w-3 h-[342px] rounded-full bg-[#6e6e6e]" />
          <Arrow dir="down" />
        </div>
      </div>
      <div className="mr-[26px] h-[26px] mt-px rounded-full bg-[#f5f5f5] flex items-center px-[6px]">
        <Arrow dir="left" />
        <div className="ml-[6px] w-[285px] h-3 rounded-full bg-[#6e6e6e]" />
        <span className="ml-auto"><Arrow dir="right" /></span>
      </div>
    </aside>
  )
}

function SideRail() {
  return (
    <div className="w-[60px] shrink-0 bg-[#fafafa] flex flex-col items-center">
      <button aria-label="字段列表" className="h-[60px]">
        <Svg w={19} h={26} className="-ml-1">
          <path d="M1 1h17v24H1zM1 16.500h17M1 21h17M9.500 16.500V25M4 6h1.500M8 6h7M4 11h1.500M8 11h7" stroke="#444" strokeWidth="1.300" />
        </Svg>
      </button>
      <button aria-label="设置格式" className="size-[60px] rounded-md border border-[#555] bg-[#e4e4e4] flex items-center justify-center">
        <Svg w={28} h={28}>
          <path d="M1 10l8-6 7 6-7 9z" fill="#fff" stroke="#333" strokeWidth="1.500" />
          <path d="M8 9V2c0-2 3-2 3 0v5" stroke="#333" strokeWidth="1.300" />
          <path d="M14 6c4-1 5 3 5 7" stroke="#1b87d6" strokeWidth="2" />
          <path d="M16 21L27 10l1 1-9 13z" fill="#fff" stroke="#333" strokeWidth="1.300" />
          <path d="M19 23c-2 6-9 6-13 3 4 0 5-6 9-5 2 0 4 1 4 2z" fill="#83bdec" stroke="#0f6cbd" strokeWidth="1.300" />
        </Svg>
      </button>
    </div>
  )
}

export default function App() {
  return (
    <div className="relative h-screen flex flex-col overflow-hidden bg-[#e4e5ea] font-['Noto_Sans_CJK_SC',sans-serif]">
      <TitleBar />
      <MenuBar />
      <Ribbon />
      <FormulaBar />

      <main className="flex-1 min-h-0 flex">
        <div className="flex-1 min-w-0 flex flex-col">
          <div className="flex-1 min-h-0 flex">
            <div className="relative flex-1 min-w-0 mr-[3px] bg-white overflow-hidden">
              <Grid />
              <Slicer />
              <ChartObject />
              <button aria-label="图表元素" className="absolute left-[476px] top-[132px] size-[42px] bg-[#86bf9f] border border-[#3f8f63] flex items-center justify-center">
                <Svg w={32} h={32}><path d="M15 0v32M0 16h32" stroke="#146c3a" strokeWidth="1.600" /></Svg>
              </button>
              <button aria-label="图表样式" className="absolute left-[476px] top-[189px] size-[42px] bg-white border border-[#666] flex items-center justify-center">
                <Svg w={36} h={34}>
                  <path d="M14 19C20 11 28 2 34 2c3 2-5 12-15 21z" fill="#fff" stroke="#444" strokeWidth="1.500" />
                  <path d="M17 24c-1 8-11 9-16 4 5 1 5-5 8-8 3-1 7 0 8 4z" fill="#83bdec" stroke="#0f6cbd" strokeWidth="1.500" />
                </Svg>
              </button>
            </div>
            <div className="w-7 pr-0.5">
              <div className="h-full rounded-full bg-[#f5f5f5] flex flex-col items-center py-[6px]">
                <Arrow dir="up" />
                <div className="mt-[6px] w-3 h-[228px] rounded-full bg-[#6e6e6e]" />
                <span className="mt-auto"><Arrow dir="down" /></span>
              </div>
            </div>
          </div>
          <SheetTabs />
        </div>
        <FormatPane />
        <SideRail />
      </main>

      {/* red callouts and the arrow between them */}
      <svg className="absolute left-0 top-0 w-full h-full pointer-events-none" fill="none">
        <rect x="954" y="575.500" width="136.500" height="53" rx="1" stroke="#ff1e10" strokeWidth="3" />
        <rect x="1466.500" y="951.500" width="170" height="48" rx="1" stroke="#ff1e10" strokeWidth="3" />
        <path d="M1053 634l17 3-4 3 384 322.500-1 1.500L1062 646l-3 4z" fill="#ff1e10" />
      </svg>
      <span className="absolute right-[15px] bottom-1.5 text-[15px] leading-6 text-[#8c8c8c]">CSDN @毛媛媛</span>
    </div>
  )
}
